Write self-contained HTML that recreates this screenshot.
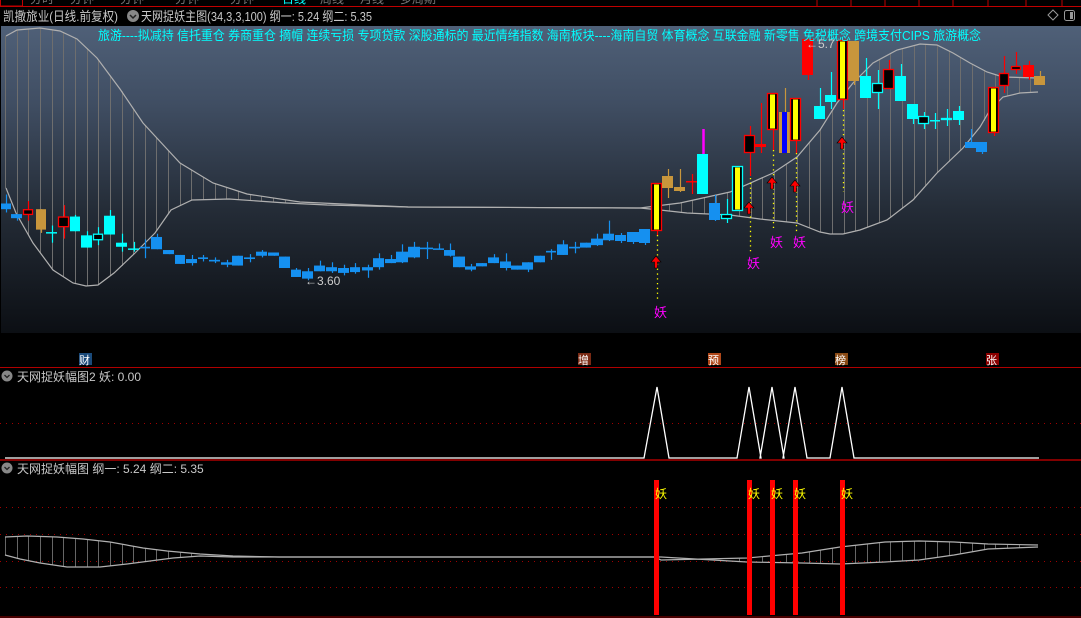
<!DOCTYPE html>
<html><head><meta charset="utf-8">
<style>
html,body{margin:0;padding:0;background:#000;width:1081px;height:618px;overflow:hidden}
svg{display:block}
text{font-family:"Liberation Sans","Noto Sans CJK SC","WenQuanYi Zen Hei",sans-serif}
</style></head><body>
<svg id="s" width="1081" height="618" viewBox="0 0 1081 618" xmlns="http://www.w3.org/2000/svg">
<defs>
<linearGradient id="g" x1="0" y1="0" x2="0" y2="1">
<stop offset="0" stop-color="#4f6078"/>
<stop offset="0.25" stop-color="#404e63"/>
<stop offset="0.6" stop-color="#242c37"/>
<stop offset="1" stop-color="#0c0f14"/>
</linearGradient>
</defs>
<rect width="1081" height="618" fill="#000"/>
<rect x="0" y="0" width="1081" height="6" fill="#000"/>
<line x1="0" y1="6.5" x2="1081" y2="6.5" stroke="#c00000" stroke-width="1"/>
<rect x="0.5" y="-2" width="22" height="8" fill="none" stroke="#c00000"/>
<g fill="#777" font-size="12"><text x="30" y="3">分时</text><text x="70" y="3">分钟</text><text x="120" y="3">分钟</text><text x="175" y="3">分钟</text><text x="230" y="3">分钟</text><text x="282" y="3" fill="#0ff">日线</text><text x="320" y="3">周线</text><text x="360" y="3">月线</text><text x="400" y="3">多周期</text></g>
<g stroke="#c00000"><line x1="817" y1="0" x2="817" y2="6"/><line x1="851" y1="0" x2="851" y2="6"/><line x1="885" y1="0" x2="885" y2="6"/><line x1="919" y1="0" x2="919" y2="6"/><line x1="953" y1="0" x2="953" y2="6"/><line x1="988" y1="0" x2="988" y2="6"/><line x1="1026" y1="0" x2="1026" y2="6"/><line x1="1062" y1="0" x2="1062" y2="6"/></g>
<text x="3" y="21" fill="#c8c8c8" font-size="13" textLength="115" lengthAdjust="spacingAndGlyphs">凯撒旅业(日线.前复权)</text>
<circle cx="133" cy="16" r="6" fill="#888"/><path d="M130 15 L133 18 L136 15" stroke="#222" stroke-width="1.5" fill="none"/>
<text x="141" y="21" fill="#c8c8c8" font-size="13" textLength="231" lengthAdjust="spacingAndGlyphs">天网捉妖主图(34,3,3,100) 纲一: 5.24 纲二: 5.35</text>
<path d="M1053 10 L1058 15 L1053 20 L1048 15 Z" fill="none" stroke="#999"/>
<rect x="1064.5" y="10.5" width="10" height="10" rx="2" fill="none" stroke="#999"/><rect x="1070" y="12" width="3" height="7" fill="#999"/>
<rect x="1" y="26" width="1080" height="307" fill="url(#g)"/>
<g id="band"></g>
<g id="cand"></g>
<text x="98" y="40" fill="#00ffff" font-size="13" textLength="883" lengthAdjust="spacingAndGlyphs">旅游----拟减持 信托重仓 券商重仓 摘帽 连续亏损 专项贷款 深股通标的 最近情绪指数 海南板块----海南自贸 体育概念 互联金融 新零售 免税概念 跨境支付CIPS 旅游概念</text>
<g stroke="#ffff00" stroke-width="1.3" stroke-dasharray="1.3,3.5">
<line x1="657.5" y1="235" x2="657.5" y2="300"/><line x1="750.5" y1="178" x2="750.5" y2="252"/><line x1="773.5" y1="150" x2="773.5" y2="228"/><line x1="796.5" y1="153" x2="796.5" y2="232"/><line x1="843.5" y1="110" x2="843.5" y2="192"/>
</g>
<g id="arrows"></g>
<g fill="#ff00ff" font-size="13"><text x="654" y="317">妖</text><text x="747" y="268">妖</text><text x="770" y="247">妖</text><text x="793" y="247">妖</text><text x="841" y="212">妖</text></g>
<g fill="#ccc" font-size="12"><text x="305" y="285">←3.60</text><text x="806" y="48">←5.7</text></g>
<g font-size="11" fill="#fff">
<rect x="79" y="353" width="13" height="12" fill="#1a4a7a"/><text x="79" y="364">财</text>
<rect x="578" y="353" width="13" height="12" fill="#7a2a14"/><text x="578" y="364">增</text>
<rect x="708" y="353" width="13" height="12" fill="#b0481a"/><text x="708" y="364">预</text>
<rect x="835" y="353" width="13" height="12" fill="#8a4a14"/><text x="835" y="364">榜</text>
<rect x="986" y="353" width="13" height="12" fill="#8b0000"/><text x="986" y="364">张</text>
</g>
<line x1="0" y1="367.5" x2="1081" y2="367.5" stroke="#b00000"/>
<circle cx="7" cy="376" r="5.5" fill="#888"/><path d="M4.5 375 L7 377.5 L9.5 375" stroke="#222" stroke-width="1.3" fill="none"/>
<text x="17" y="381" fill="#c8c8c8" font-size="12">天网捉妖幅图2 妖: 0.00</text>
<line x1="0" y1="423.5" x2="1081" y2="423.5" stroke="#a00000" stroke-dasharray="1,5"/>
<path d="M5 458 L644 458 L657 387 L669 458 L737 458 L749 387 L761 458 L760 458 L772 387 L784 458 L783 458 L795 387 L807 458 L830 458 L842 387 L854 458 L1039 458" stroke="#fff" stroke-width="1.3" fill="none"/>
<line x1="0" y1="460" x2="1081" y2="460" stroke="#d00000" stroke-width="1.3"/>
<circle cx="7" cy="468" r="5.5" fill="#888"/><path d="M4.5 467 L7 469.5 L9.5 467" stroke="#222" stroke-width="1.3" fill="none"/>
<text x="17" y="473" fill="#c8c8c8" font-size="12">天网捉妖幅图 纲一: 5.24 纲二: 5.35</text>
<g stroke="#a00000" stroke-dasharray="1,5"><line x1="0" y1="507.5" x2="1081" y2="507.5"/><line x1="0" y1="534.5" x2="1081" y2="534.5"/><line x1="0" y1="561.5" x2="1081" y2="561.5"/><line x1="0" y1="587.5" x2="1081" y2="587.5"/></g>
<g id="band3"></g>
<g fill="#ff0000"><rect x="654" y="480" width="5" height="135"/><rect x="747" y="480" width="5" height="135"/><rect x="770" y="480" width="5" height="135"/><rect x="793" y="480" width="5" height="135"/><rect x="840" y="480" width="5" height="135"/></g>
<g fill="#ffff00" font-size="12"><text x="655" y="498">妖</text><text x="748" y="498">妖</text><text x="771" y="498">妖</text><text x="794" y="498">妖</text><text x="841" y="498">妖</text></g>
<line x1="0" y1="617" x2="1081" y2="617" stroke="#900000"/>
</svg>
<script>
var NS="http://www.w3.org/2000/svg";
function el(p,t,a){var e=document.createElementNS(NS,t);for(var k in a)e.setAttribute(k,a[k]);p.appendChild(e);return e;}
var C=[
[1,11,211,218,200,222,'b'],[11,22,224,229,224,232,'b'],[23,33,218,225,208,232,'rh'],[36,46,218,243,218,247,'o'],
[46,57,246,247,238,259,'c'],[58,69,227,240,213,254,'rh'],[70,80,227,245,225,245,'c'],[81,92,250,265,245,265,'c'],
[93,103,248,256,240,262,'ch'],[104,115,226,249,219,249,'c'],[116,127,259,264,248,270,'c'],[128,139,266,267,258,270,'c'],
[140,150,264,266,255,278,'b'],[151,162,252,267,248,267,'b'],[163,174,268,273,268,273,'b'],[175,185,274,285,274,285,'b'],
[186,197,279,284,274,287,'b'],[198,208,277,279,274,282,'b'],[209,220,280,282,277,284,'b'],[221,232,283,286,280,289,'b'],
[232,243,275,287,275,287,'b'],[244,255,277,279,273,283,'b'],[256,267,270,275,268,277,'b'],[268,279,271,275,271,275,'b'],
[279,290,276,290,276,290,'b'],[291,301,292,301,290,301,'b'],[302,313,294,303,290,305,'b'],[314,325,287,294,281,294,'b'],
[326,337,289,294,283,296,'b'],[338,349,290,296,286,299,'b'],[350,360,289,295,284,297,'b'],[362,373,289,293,286,302,'b'],
[373,384,278,289,272,292,'b'],[385,396,279,284,274,284,'b'],[396,408,270,283,261,284,'b'],[408,420,264,277,258,278,'b'],
[420,433,265,267,258,279,'b'],[433,444,266,267,260,267,'b'],[444,455,268,275,260,276,'b'],[453,465,276,289,276,289,'b'],
[465,476,288,292,285,294,'b'],[476,487,284,288,284,288,'b'],[488,499,277,284,273,284,'b'],[500,511,282,290,272,293,'b'],
[511,522,287,292,287,292,'b'],[522,533,283,292,283,295,'b'],[534,545,275,283,275,283,'b'],[546,556,269,271,267,280,'b'],
[557,568,261,274,256,274,'b'],[569,580,264,266,258,272,'b'],[580,591,259,265,259,265,'b'],[591,603,254,262,248,263,'b'],
[603,614,248,256,232,257,'b']];
for(var i=0;i<C.length;i++){for(var j=2;j<6;j++)C[i][j]=170+(C[i][j]-170)*0.8167;}
C=C.concat([
[615,626,235,241,233,243,'b'],[627,639,232,242,232,244,'b'],[639,650,229,243,229,245,'b'],
[651,662,183,231,183,235,'y'],[662,673,176,188,169,198,'o'],[674,685,187,191,169,192,'o'],[686,697,181,182,174,194,'rx'],
[697,708,154,194,129,194,'cm'],[709,720,203,220,195,221,'b'],[721,732,214,219,199,223,'ch'],[732,743,166,211,166,211,'yc'],
[744,755,135,153,126,176,'rh'],[755,766,144,147,103,153,'r'],[767,778,93,130,93,150,'y'],[779,790,112,153,88,153,'ob'],
[790,801,98,141,98,153,'y'],[802,813,39,75,39,80,'r'],[814,825,106,119,88,119,'c'],[825,836,95,102,72,109,'c'],
[837,848,40,100,40,109,'y'],[848,859,41,81,41,85,'o'],[860,871,76,98,58,98,'c'],[872,883,83,93,70,109,'ch'],
[883,894,69,89,60,89,'rh'],[895,906,76,101,64,101,'c'],[907,918,104,119,104,124,'c'],[918,929,116,124,112,129,'ch'],
[930,940,120,121,113,129,'c'],[941,952,118,120,109,126,'ch'],[953,964,111,120,106,125,'c'],[965,976,142,148,129,148,'b'],
[976,987,142,152,142,154,'b'],[988,999,87,133,87,136,'y'],[999,1009,73,86,56,93,'rh'],[1011,1021,66,70,52,74,'rh'],
[1023,1034,65,77,61,80,'r'],[1034,1045,76,85,71,85,'o']]);
var U=[[6,36],[17,30],[40,28],[60,31],[77,39],[97,58],[120,89],[143,123],[167,149],[180,163],[213,183],[247,194],[300,202],[408,207],[640,208],[680,203],[730,192],[773,173],[797,157],[820,130],[837,103],[853,83],[873,63],[897,50],[920,44],[937,45],[953,53],[970,63],[987,72],[1003,77],[1037,78]];
var L=[[6,188],[16,213],[33,243],[53,270],[73,283],[86,286],[98,285],[114,273],[135,253],[155,233],[171,210],[192,200],[229,199],[286,203],[327,205],[408,207],[640,208],[660,210],[687,213],[730,215],[760,219],[797,223],[820,232],[830,234],[843,234],[860,230],[887,220],[913,200],[937,173],[963,148],[980,127],[990,110],[1003,97],[1020,93],[1038,92]];
function interp(P,x){if(x<=P[0][0])return P[0][1];for(var i=1;i<P.length;i++){if(x<=P[i][0]){var a=P[i-1],b=P[i];return a[1]+(b[1]-a[1])*(x-a[0])/(b[0]-a[0]);}}return P[P.length-1][1];}
function pts(P){return P.map(function(p){return p[0]+','+p[1]}).join(' ');}
var band=document.getElementById('band');
for(var x=5;x<1040;x+=11.65){var a=interp(U,x),b=interp(L,x);if(Math.abs(a-b)>3)el(band,'line',{x1:Math.round(x)+.5,y1:a,x2:Math.round(x)+.5,y2:b,stroke:'#6e6e6e','stroke-width':1});}
el(band,'polyline',{points:pts(U),fill:'none',stroke:'#b0b0b0','stroke-width':1.2});
el(band,'polyline',{points:pts(L),fill:'none',stroke:'#b0b0b0','stroke-width':1.2});
var cg=document.getElementById('cand');
var col={b:'#1590f0',c:'#00ffff',ch:'#00ffff',rh:'#ff0000',r:'#ff0000',o:'#c8963c',y:'#ff0000',yc:'#00ffff',ob:'#c8963c',rx:'#ff0000',cm:'#00ffff'};
C.forEach(function(k){var x1=k[0],x2=k[1],w=x2-x1,cx=Math.round((x1+x2)/2)+.5,t=k[6],c=col[t];
 var wc=(t=='y')?'#ff0000':c;
 el(cg,'line',{x1:cx,y1:k[4],x2:cx,y2:k[5],stroke:wc,'stroke-width':1.2});
 if(t=='cm')el(cg,'line',{x1:cx,y1:k[4],x2:cx,y2:k[2],stroke:'#ff00ff','stroke-width':2.5});
 var h=Math.max(1.5,k[3]-k[2]);
 if(t=='b'||t=='c'||t=='r'||t=='o'||t=='cm')el(cg,'rect',{x:x1,y:k[2],width:w,height:h,fill:c});
 else if(t=='rx')el(cg,'rect',{x:x1,y:k[2],width:w,height:1.5,fill:c});
 else if(t=='ch'||t=='rh')el(cg,'rect',{x:x1+.5,y:k[2]+.5,width:w-1,height:h-1,fill:'#000',stroke:c,'stroke-width':1.3});
 else if(t=='y'||t=='yc'){el(cg,'rect',{x:x1+.5,y:k[2]+.5,width:w-1,height:h-1,fill:'#000',stroke:c,'stroke-width':1.3});el(cg,'rect',{x:x1+3,y:k[2]+1.5,width:w-6,height:h-3,fill:'#ffff00'});}
 else if(t=='ob'){el(cg,'rect',{x:x1,y:k[2],width:w,height:h,fill:c});el(cg,'rect',{x:x1+3,y:k[2],width:w-6,height:h,fill:'#0000ff'});}
});
var ag=document.getElementById('arrows');
[[656,262],[749,208],[772,183],[795,186],[842,143]].forEach(function(p){var x=p[0],y=p[1];
 el(ag,'path',{d:'M'+x+' '+(y-6)+' L'+(x+5)+' '+(y)+' L'+(x+1.5)+' '+y+' L'+(x+1.5)+' '+(y+6)+' L'+(x-1.5)+' '+(y+6)+' L'+(x-1.5)+' '+y+' L'+(x-5)+' '+y+' Z',fill:'#ff0000',stroke:'#000','stroke-width':.6});});
var b3=document.getElementById('band3');
var U3=[[5,537],[27,536],[57,537],[83,539],[110,542],[143,548],[167,551],[200,554],[233,556],[279,557],[655,557],[661,560],[747,558],[802,553],[840,547],[885,542],[919,541],[954,542],[988,544],[1038,545]];
var L3=[[5,555],[20,559],[40,563],[67,567],[100,567],[127,564],[150,561],[173,558],[200,556],[233,557],[279,557],[655,557],[661,557],[747,562],[802,563],[840,564],[885,562],[919,560],[954,555],[988,549],[1038,547]];
for(var x=5;x<1040;x+=11.65){var a=interp(U3,x),b=interp(L3,x);if(Math.abs(a-b)>2.5)el(b3,'line',{x1:Math.round(x)+.5,y1:a,x2:Math.round(x)+.5,y2:b,stroke:'#666','stroke-width':1});}
el(b3,'polyline',{points:pts(U3),fill:'none',stroke:'#b0b0b0','stroke-width':1.2});
el(b3,'polyline',{points:pts(L3),fill:'none',stroke:'#b0b0b0','stroke-width':1.2});
</script>
</body></html>
